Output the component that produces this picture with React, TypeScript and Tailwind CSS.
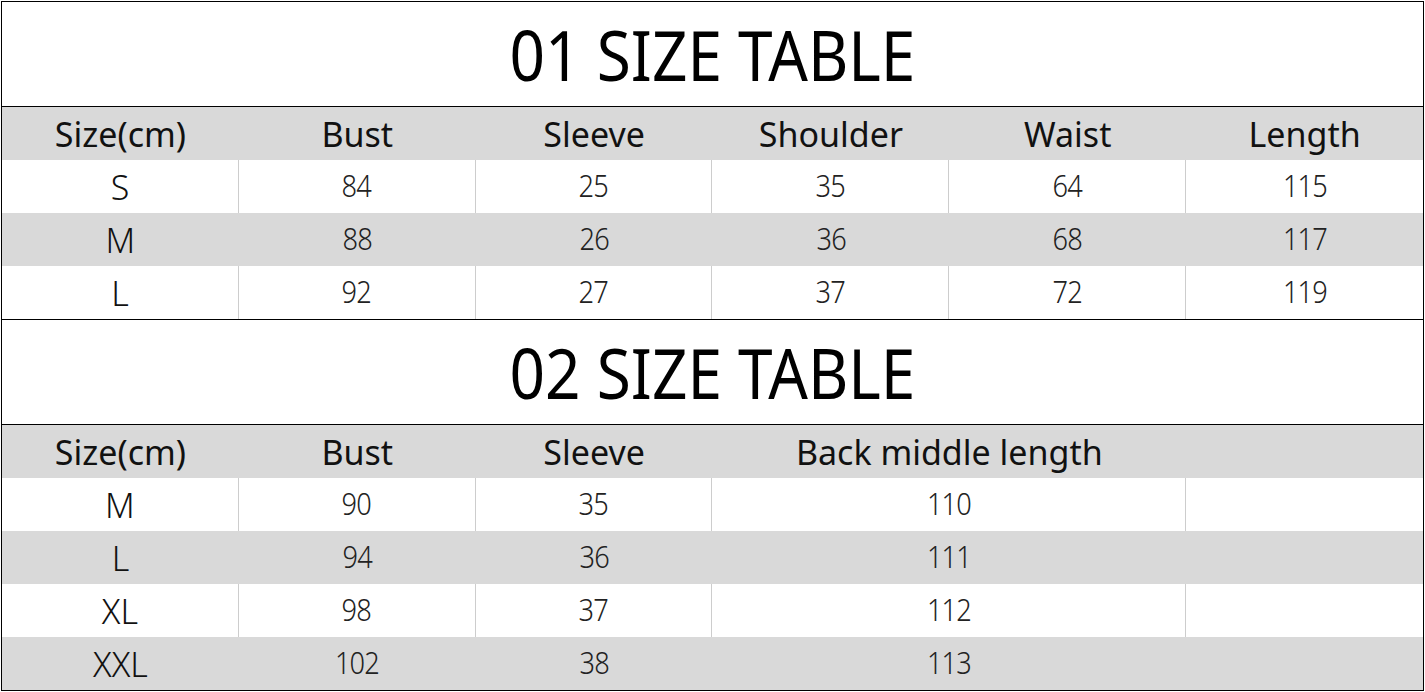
const font = { fontFamily: '"Noto Sans", "Open Sans", sans-serif' };

type Cell = { text: string; span?: number };

function Row({ cells, shaded, header }: { cells: Cell[]; shaded?: boolean; header?: boolean }) {
	return (
		<div className={`grid h-[53px] grid-cols-6 ${shaded || header ? "bg-[#d9d9d9]" : "bg-white"}`}>
			{cells.map((c, i) => (
				<div
					key={i}
					className={`flex items-center justify-center ${c.span === 2 ? "col-span-2" : ""} ${
						!shaded && !header && i < cells.length - 1 ? "border-r border-[#cdcdcd]" : ""
					}`}
				>
					{header ? (
						<span className="text-[34px] leading-none text-[#111]">{c.text}</span>
					) : i === 0 ? (
						<span className="text-[34px] leading-none font-light text-[#111]">{c.text}</span>
					) : (
						<span className="inline-block scale-x-[0.85] pb-[4px] text-[32px] leading-none font-light tracking-[-1px] text-[#222]">
							{c.text}
						</span>
					)}
				</div>
			))}
		</div>
	);
}

function Title({ text }: { text: string }) {
	return (
		<div className="flex h-[105px] items-center justify-center border-b border-black bg-white">
			<span className="inline-block scale-x-90 text-[69px] leading-none text-black">{text}</span>
		</div>
	);
}

const table1 = [
	["S", "84", "25", "35", "64", "115"],
	["M", "88", "26", "36", "68", "117"],
	["L", "92", "27", "37", "72", "119"],
];

const table2 = [
	["M", "90", "35", "110"],
	["L", "94", "36", "111"],
	["XL", "98", "37", "112"],
	["XXL", "102", "38", "113"],
];

export default function App() {
	return (
		<div className="h-[692px] w-[1425px] bg-white pt-px pl-px" style={font}>
			<div className="w-[1423px] border border-black">
				<div className="border-b border-black">
					<Title text="01 SIZE TABLE" />
					<Row
						header
						cells={["Size(cm)", "Bust", "Sleeve", "Shoulder", "Waist", "Length"].map((t) => ({ text: t }))}
					/>
					{table1.map((r, i) => (
						<Row key={i} shaded={i % 2 === 1} cells={r.map((t) => ({ text: t }))} />
					))}
				</div>
				<Title text="02 SIZE TABLE" />
				<Row
					header
					cells={[
						{ text: "Size(cm)" },
						{ text: "Bust" },
						{ text: "Sleeve" },
						{ text: "Back middle length", span: 2 },
						{ text: "" },
					]}
				/>
				{table2.map((r, i) => (
					<Row
						key={i}
						shaded={i % 2 === 1}
						cells={[{ text: r[0] }, { text: r[1] }, { text: r[2] }, { text: r[3], span: 2 }, { text: "" }]}
					/>
				))}
			</div>
		</div>
	);
}
